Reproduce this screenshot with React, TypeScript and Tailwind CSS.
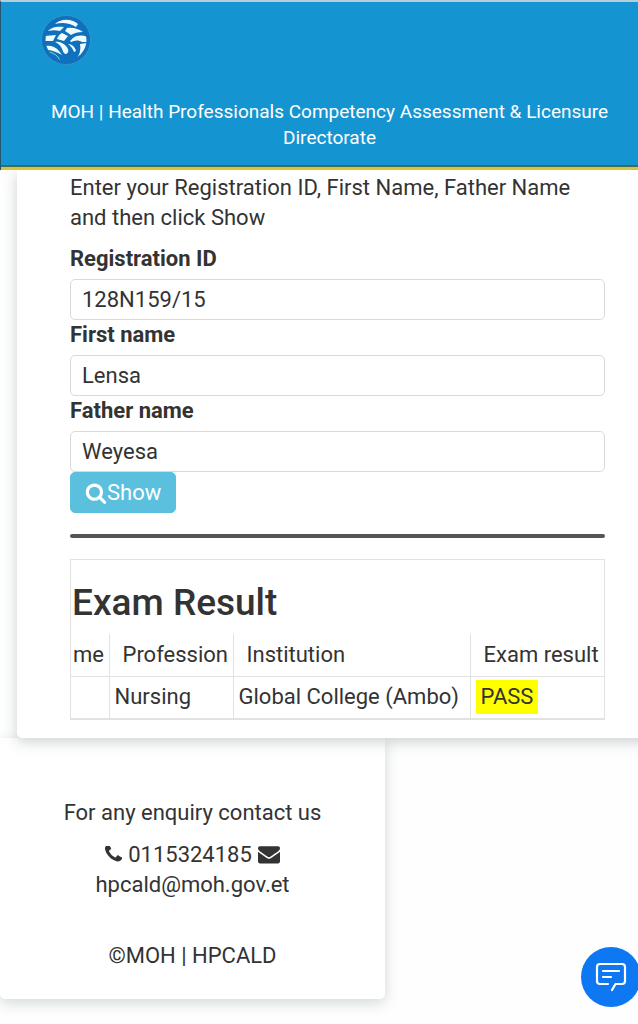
import { useState } from 'react';

interface IconProps {
  className?: string;
}

function SearchIcon({ className }: IconProps) {
  return (
    <svg viewBox="0 0 1792 1792" className={className} fill="currentColor" aria-hidden="true">
      <path d="M1216 832q0-185-131.5-316.5t-316.5-131.5-316.5 131.5-131.5 316.5 131.5 316.5 316.5 131.5 316.5-131.5 131.5-316.5zm512 832q0 52-38 90t-90 38q-54 0-90-38l-343-342q-179 124-399 124-143 0-273.5-55.5t-225-150-150-225-55.5-273.5 55.5-273.5 150-225 225-150 273.5-55.5 273.5 55.5 225 150 150 225 55.5 273.5q0 220-124 399l343 343q37 37 37 90z" />
    </svg>
  );
}

function PhoneIcon({ className }: IconProps) {
  return (
    <svg viewBox="192 256 1408 1408" className={className} fill="currentColor" aria-hidden="true">
      <path d="M1600 1240q0 27-10 70.5t-21 68.5q-21 50-122 106-94 51-186 51-27 0-53-3.5t-57.5-12.5-47-14.5-55.5-20.5-49-18q-98-35-175-83-127-79-264-216t-216-264q-48-77-83-175-3-9-18-49t-20.5-55.5-14.5-47-12.5-57.5-3.5-53q0-92 51-186 56-101 106-122 25-11 68.5-21t70.5-10q14 0 21 3 18 6 53 76 11 19 30 54t35 63.5 31 53.5q3 4 17.5 25t21.5 35.5 7 28.5q0 20-28.5 50t-62 55-62 53-28.5 46q0 9 5 22.5t8.5 20.5 14 24 11.5 19q76 137 174 235t235 174q2 1 19 11.5t24 14 20.5 8.5 22.5 5q18 0 46-28.5t53-62 55-62 50-28.5q14 0 28.5 7t35.5 21.5 25 17.5q25 15 53.5 31t63.5 35 54 30q70 35 76 53 3 7 3 21z" />
    </svg>
  );
}

function EnvelopeIcon({ className }: IconProps) {
  return (
    <svg viewBox="0 0 1792 1792" className={className} fill="currentColor" aria-hidden="true">
      <path d="M1792 710v794q0 66-47 113t-113 47h-1472q-66 0-113-47t-47-113v-794q44 49 101 87 362 246 497 345 57 42 92.5 65.5t94.5 48 110 24.5h2q51 0 110-24.5t94.5-48 92.5-65.5q170-123 498-345 57-39 100-87zm0-294q0 79-49 151t-122 123q-376 261-468 325-10 7-42.5 31t-54 38.5-52 32.5-57.5 27-50 9h-2q-23 0-50-9t-57.5-27-52-32.5-54-38.5-42.5-31q-91-64-262-182.5t-205-142.5q-62-42-117-115.5t-55-136.5q0-78 41.5-130t118.5-52h1472q65 0 112.5 47t47.5 113z" />
    </svg>
  );
}

function ChatIcon({ className }: IconProps) {
  return (
    <svg
      viewBox="0 0 32 30"
      className={className}
      fill="none"
      stroke="currentColor"
      strokeWidth="2.2"
      strokeLinecap="round"
      strokeLinejoin="round"
      aria-hidden="true"
    >
      <path d="M13 22H5a3 3 0 0 1-3-3V5a3 3 0 0 1 3-3h22a3 3 0 0 1 3 3v14a3 3 0 0 1-3 3h-6.500l-3.500 6" />
      <path d="M8 9h16M8 15h8" />
    </svg>
  );
}

// Round woven emblem of the ministry
function Logo({ className }: IconProps) {
  return (
    <svg viewBox="0 0 50 50" className={className} role="img" aria-label="MOH">
      <defs>
        <clipPath id="weave">
          <circle cx="25" cy="25" r="20.5" />
        </clipPath>
      </defs>
      <circle cx="25" cy="25" r="24.5" fill="#0f70bd" stroke="#4b9fc4" strokeWidth="0.6" />
      <g clipPath="url(#weave)" fill="#effcfb">
        <path d="M14 9C20 3 31 3 37 9L35 12C29 8 21 7 14 9Z" />
        <path d="M7 16C10 12 17 11 23 12L19 16C15 15 11 15 7 16Z" />
        <path d="M26 13C32 12 38 14 42 17C37 17 33 18 30 20L24 16Z" />
        <path d="M4 21L15 20L12 26H4Z" />
        <path d="M21 18L27 21L23 26L16 24C17 21 19 19 21 18Z" />
        <path d="M32 23C36 20 42 20 47 22V27H41C38 25 34 25 30 27L29 26Z" />
        <path d="M14 27C18 26 22 28 25 31C28 34 28 38 25 39C22 39 22 35 20 32C18 29 16 28 14 27Z" />
        <path d="M27 29C31 29 34 32 35 36L33 37C32 34 30 31 27 29Z" />
        <path d="M4 31C10 30 15 32 18 36L21 40C16 37 11 35 5 35Z" />
        <path d="M39 29L46 28V36L36 43C39 39 40 34 39 29Z" />
        <path fill="none" stroke="#8fd9c4" strokeWidth="1" d="M8 37C13 38 17 41 19 45" />
      </g>
    </svg>
  );
}

interface FieldProps {
  id: string;
  label: string;
  value: string;
  onChange: (value: string) => void;
}

function Field({ id, label, value, onChange }: FieldProps) {
  return (
    <div>
      <label htmlFor={id} className="block mb-[5px] leading-[30px] font-bold">
        {label}
      </label>
      <input
        id={id}
        type="text"
        value={value}
        onChange={e => onChange(e.target.value)}
        className="block w-full h-[41px] px-[11px] bg-white border border-[#d9d9d9] rounded-[5px] outline-none focus:border-[#66afe9]"
      />
    </div>
  );
}

export default function App() {
  const [registrationId, setRegistrationId] = useState('128N159/15');
  const [firstName, setFirstName] = useState('Lensa');
  const [fatherName, setFatherName] = useState('Weyesa');

  return (
    <div className="overflow-x-hidden bg-[#fefefe] pb-[26px] font-[Roboto,sans-serif] text-[22px] leading-[30px] text-[#333]">
      <header className="relative z-20 border-t-2 border-l border-t-[#b5ced9] border-l-[#24566f] bg-[#1594d2] text-white">
        <div className="border-b-2 border-[#3f6c5a] px-10 pt-[13px] pb-[14px]">
          <Logo className="h-[50px] w-[50px]" />
          <h1 className="mt-[34px] -mr-5 text-center text-[19px] leading-[26px]">
            MOH | Health Professionals Competency Assessment &amp; Licensure Directorate
          </h1>
        </div>
        <div className="h-[3px] bg-[#d9c52f]" />
      </header>

      <main className="relative z-10 ml-[17px] -mr-5 rounded-bl-[5px] bg-white pt-[3px] pr-[53px] pb-[18px] pl-[53px] shadow-[0_4px_14px_rgba(60,80,80,0.25)]">
        <p className="mb-[11px]">Enter your Registration ID, First Name, Father Name and then click Show</p>

        <form onSubmit={e => e.preventDefault()}>
          <Field id="registration-id" label="Registration ID" value={registrationId} onChange={setRegistrationId} />
          <Field id="first-name" label="First name" value={firstName} onChange={setFirstName} />
          <Field id="father-name" label="Father name" value={fatherName} onChange={setFatherName} />
          <button
            type="submit"
            className="flex h-[41px] items-center rounded-[5px] border border-[#5bc0de] bg-[#5bc0de] px-[14px] text-white"
          >
            <SearchIcon className="h-[22px] w-[22px]" />
            Show
          </button>
        </form>

        <hr className="mt-[21px] mb-[21px] h-1 rounded-full border-0 bg-[#555]" />

        <section className="overflow-hidden border border-b-2 border-[#e2e2e2]">
          <h2 className="pt-[18px] pb-[7px] pl-px text-[37px] leading-[49px] font-medium">Exam Result</h2>
          <table className="w-full table-fixed border-collapse whitespace-nowrap">
            <colgroup>
              <col className="w-[38px]" />
              <col className="w-[124px]" />
              <col />
              <col className="w-[134px]" />
            </colgroup>
            <thead>
              <tr className="h-[42px] text-left">
                <th className="pl-[2px] font-normal">me</th>
                <th className="border-l border-[#e2e2e2] pl-[13px] font-normal">Profession</th>
                <th className="border-l border-[#e2e2e2] pl-[13px] font-normal">Institution</th>
                <th className="border-l border-[#e2e2e2] pl-[13px] font-normal">Exam result</th>
              </tr>
            </thead>
            <tbody>
              <tr className="h-[42px] border-t border-[#e2e2e2]">
                <td></td>
                <td className="border-l border-[#e2e2e2] pl-[5px]">Nursing</td>
                <td className="border-l border-[#e2e2e2] pl-[5px]">Global College (Ambo)</td>
                <td className="border-l border-[#e2e2e2] pl-[5px]">
                  <mark className="inline-block bg-[#ff0] px-[5px] py-[2px] text-[#333]">PASS</mark>
                </td>
              </tr>
            </tbody>
          </table>
        </section>
      </main>

      <footer className="w-[385px] max-w-full rounded-b-[5px] bg-white px-4 pt-[60px] pb-7 text-center shadow-[0_4px_14px_rgba(60,80,80,0.22)]">
        <p className="mb-3">For any enquiry contact us</p>
        <p className="mb-[41px]">
          <PhoneIcon className="mr-[6px] inline-block h-[17px] w-[17px] align-[-1px]" />
          <a href="tel:0115324185">0115324185</a>
          <EnvelopeIcon className="ml-[6px] inline-block h-[22px] w-[22px] align-[-3px]" />
          <br />
          <a href="mailto:hpcald@moh.gov.et">hpcald@moh.gov.et</a>
        </p>
        <p>©MOH | HPCALD</p>
      </footer>

      <button
        type="button"
        aria-label="Open chat"
        className="fixed -right-[3px] bottom-[17px] z-30 flex h-[60px] w-[60px] items-center justify-center rounded-full bg-[#0d78f2] text-white"
      >
        <ChatIcon className="h-[30px] w-8" />
      </button>
    </div>
  );
}
